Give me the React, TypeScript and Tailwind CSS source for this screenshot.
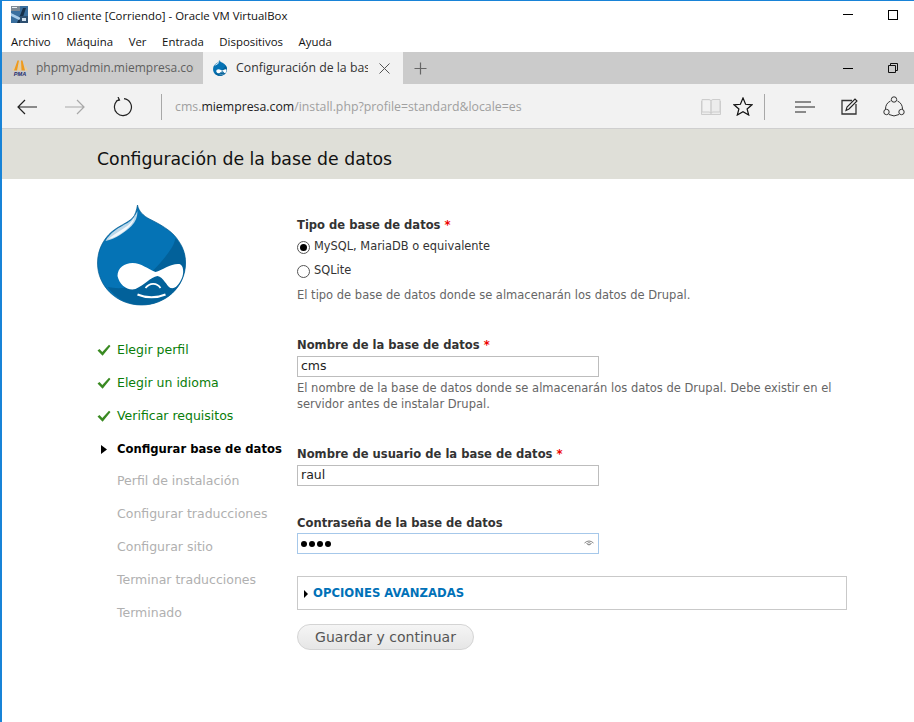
import React from "react";

const ui = { fontFamily: '"Open Sans", "Noto Sans", sans-serif' };
const dj = { fontFamily: '"DejaVu Sans", sans-serif' };

function DrupalDrop({ size = 89, height = 101 }: { size?: number; height?: number }) {
  return (
    <svg width={size} height={height} viewBox="-0.5 0 89 101">
      <path d="M40 0 C41 6 46 11 52 14 C62 19 73 25 79 33 C85 41 88 48 88 58 C88 82 68 100 44 100 C19 100 0 81 0 58 C0 45 6 34 14 27 C21 21 30 18 35 13 C38 10 39 5 40 0 Z" fill="#0573b5" stroke="#035a8f" strokeWidth="0.7" />
      <path d="M78 33 C86 42 88 50 88 58 C88 82 68 100 44 100 C30 100 18 93 10 82 C20 84 30 84 40 78 C50 72 64 58 72 46 C75 42 77 38 78 33 Z" fill="#02619a" />
      <path d="M8 36 C12 28 22 22 30 18 C35 15 38 10 40 6 C40 12 38 17 34 21 C28 27 18 34 8 36 Z" fill="#bcd8ea" />
      <path d="M11 34 C16 29 25 25 31 20 C34 17 36 14 37 12 C36 18 32 22 27 26 C22 30 16 33 11 34 Z" fill="#f2f8fc" />
      <path d="M20 71 C20 63 27 58 35 58 C44 58 50 64 58 67 C65 65 74 58 82 59 C86 60 87 68 84 74 C81 80 78 84 73 83 C69 81 66 72 60 71 C53 72 47 80 38 84 C30 86 22 80 20 71 Z" fill="#ffffff" />
      <path d="M48 83 C52 78 59 77 63 83" fill="none" stroke="#ffffff" strokeWidth="1.8" />
      <path d="M40 89.5 C48 93 60 93 68 89.5" fill="none" stroke="#ffffff" strokeWidth="2" />
    </svg>
  );
}

function Check() {
  return (
    <svg width="14" height="14" viewBox="0 0 14 14" className="shrink-0">
      <path d="M0.5 7.5 L2.5 6 L5.3 9 L12 1.8 L13.5 3 L5.6 12.8 Z" fill="#3a8a22" />
    </svg>
  );
}

function Step({ label, state }: { label: string; state: "done" | "active" | "todo" }) {
  const color = state === "done" ? "text-[#0a7d0a] text-[12.5px]" : state === "active" ? "text-black font-bold text-[11.6px] pt-[1px]" : "text-[#b0b0b0] text-[12.5px]";
  return (
    <div className={`flex h-[32.85px] items-center ${color}`} style={dj}>
      <div className="flex w-5 shrink-0 items-center">
        {state === "done" && <Check />}
        {state === "active" && (
          <svg width="6" height="9" viewBox="0 0 6 9" className="ml-1"><path d="M0 0 L6 4.5 L0 9 Z" fill="#000" /></svg>
        )}
      </div>
      <span className="whitespace-nowrap">{label}</span>
    </div>
  );
}

function Label({ children, req }: { children: React.ReactNode; req?: boolean }) {
  return (
    <div className="text-[11.55px] font-bold leading-[16px] text-[#333]">
      {children}
      {req && <span className="text-[#e00]"> *</span>}
    </div>
  );
}

function Input({ value, focus, children }: { value?: string; focus?: boolean; children?: React.ReactNode }) {
  return (
    <div className={`relative flex h-[21px] w-[302px] items-center border px-[3px] text-[12.5px] text-[#222] ${focus ? "border-[#a6c8ea]" : "border-[#bdbdbd]"}`}>
      {value}
      {children}
    </div>
  );
}

function Radio({ on, label }: { on?: boolean; label: string }) {
  return (
    <div className="flex h-[24px] items-center gap-[4px] text-[11.4px] text-[#333]">
      <span className="flex h-[13px] w-[13px] items-center justify-center rounded-full border border-[#555] bg-white">
        {on && <span className="h-[7px] w-[7px] rounded-full bg-black" />}
      </span>
      {label}
    </div>
  );
}

export default function App() {
  return (
    <div className="h-[722px] w-[914px] overflow-hidden border-l-2 border-t border-[#1883d7] bg-white">
      {/* VirtualBox title bar */}
      <div className="flex h-[27px] items-center bg-white" style={ui}>
        <svg width="17" height="17" viewBox="0 0 17 17" className="ml-[9px] shrink-0">
          <rect width="17" height="17" fill="#3a6f9e" />
          <rect x="0" y="0" width="9" height="5" fill="#7f8a94" />
          <rect x="1" y="1" width="5" height="1" fill="#e8edf2" />
          <path d="M6 17 L12 2 L15 2 L10 17 Z" fill="#16304a" />
          <path d="M0 7 L10 12 L8 14 L0 10 Z" fill="#a9cdea" />
          <rect x="9" y="10" width="8" height="7" fill="#2d4f70" />
          <rect x="11" y="12" width="4" height="3" fill="#cfe0ee" />
        </svg>
        <span className="ml-[4px] pt-[2px] text-[11.4px] text-[#111]">win10 cliente [Corriendo] - Oracle VM VirtualBox</span>
        <div className="ml-auto flex items-center">
          <span className="mr-[35px] h-px w-[10px] bg-black" />
          <span className="mr-[16px] h-[10px] w-[10px] border border-black" />
        </div>
      </div>
      {/* Menu bar */}
      <div className="flex h-[24px] items-center gap-[15.6px] pl-[9px] pt-[3px] text-[11.4px] text-[#111]" style={ui}>
        <span>Archivo</span>
        <span>Máquina</span>
        <span>Ver</span>
        <span>Entrada</span>
        <span>Dispositivos</span>
        <span>Ayuda</span>
      </div>
      {/* Tab strip */}
      <div className="flex h-[32px] items-stretch bg-[#cbcbcb]" style={ui}>
        <div className="flex w-[201px] items-center overflow-hidden pl-[10px]">
          <svg width="16" height="16" viewBox="0 0 16 16" className="shrink-0">
            <path d="M5.5 0.5 L2 10.5 H5 L7 0.5 Z M9 0.5 L9.5 10.5 H13 L10.5 0.5 Z" fill="#f09a1a" />
            <path d="M7.5 1 L6 10.5 H8.8 L8.3 1 Z M2.5 4 L0.5 10.5 H1.8 Z M13 4 L13.6 10.5 H15.5 Z" fill="#f8cf86" />
            <text x="8" y="15.7" textAnchor="middle" fontSize="5.6" fontWeight="700" fontStyle="italic" fill="#1d2a6b" fontFamily="Liberation Sans, sans-serif">PMA</text>
          </svg>
          <span className="ml-[8px] w-[158px] overflow-hidden whitespace-nowrap text-[12px] text-[#5f5f5f]">phpmyadmin.miempresa.com</span>
        </div>
        <div className="flex w-[200px] items-center bg-[#f2f2f2] pl-[10px]">
          <DrupalDrop size={14} height={16} />
          <span className="ml-[9px] w-[132px] overflow-hidden whitespace-nowrap text-[12.3px] text-[#333]">Configuración de la base de datos</span>
          <svg width="11" height="11" viewBox="0 0 11 11" className="ml-[11px]"><path d="M0.5 0.5 L10.5 10.5 M10.5 0.5 L0.5 10.5" stroke="#555" strokeWidth="1" /></svg>
        </div>
        <div className="flex w-[34px] items-center justify-center">
          <svg width="13" height="13" viewBox="0 0 13 13"><path d="M6.5 0.5 V12.5 M0.5 6.5 H12.5" stroke="#666" strokeWidth="1.2" /></svg>
        </div>
        <div className="ml-auto flex items-center">
          <span className="mr-[35px] h-px w-[10px] bg-black" />
          <svg width="10" height="10" viewBox="0 0 10 10" className="mr-[16px]"><path d="M0.5 2.5 H7.5 V9.5 H0.5 Z M2.5 2.5 V0.5 H9.5 V7.5 H7.5" fill="none" stroke="#111" strokeWidth="1" /></svg>
        </div>
      </div>
      {/* Edge toolbar */}
      <div className="flex h-[45px] items-center border-b border-[#cfcfcf] bg-[#f2f2f2] pt-[1px]" style={ui}>
        <svg width="20" height="16" viewBox="0 0 20 16" className="ml-[15px]"><path d="M20 8 H1 M8 1 L1 8 L8 15" fill="none" stroke="#222" strokeWidth="1.2" /></svg>
        <svg width="20" height="16" viewBox="0 0 20 16" className="ml-[28px]"><path d="M0 8 H19 M12 1 L19 8 L12 15" fill="none" stroke="#a8a8a8" strokeWidth="1.2" /></svg>
        <svg width="20" height="20" viewBox="0 0 20 20" className="ml-[28px]"><path d="M6 2.5 A8.5 8.5 0 1 0 11 1.6 M5 0 L6.5 3 L3 4" fill="none" stroke="#222" strokeWidth="1.2" /></svg>
        <span className="ml-[28px] h-[26px] w-px bg-[#a8a8a8]" />
        <span className="ml-[13px] pt-[1px] text-[12.3px] text-[#a0a0a0]">cms.<span className="text-[#222]">miempresa.com</span>/install.php?profile=standard&amp;locale=es</span>
        <svg width="20" height="18" viewBox="0 0 20 18" className="ml-auto"><path d="M1 1.5 H8 Q10 1.5 10 3.5 V15.5 Q10 14 8 14 H1 Z M19 1.5 H12 Q10 1.5 10 3.5 V15.5 Q10 14 12 14 H19 Z M0.5 3 V16.5 H19.5 V3" fill="#ececec" stroke="#cdcdcd" strokeWidth="1" /></svg>
        <svg width="20" height="19" viewBox="0 0 20 19" className="ml-[12px]"><path d="M10 1 L12.6 7.3 L19 7.8 L14.1 12 L15.7 18 L10 14.7 L4.3 18 L5.9 12 L1 7.8 L7.4 7.3 Z" fill="none" stroke="#111" strokeWidth="1.2" /></svg>
        <span className="ml-[11px] h-[26px] w-px bg-[#a8a8a8]" />
        <svg width="20" height="12" viewBox="0 0 20 12" className="ml-[30px]"><path d="M0 1 H16 M0 6 H20 M0 11 H11" stroke="#222" strokeWidth="1.1" /></svg>
        <svg width="17" height="17" viewBox="0 0 17 17" className="ml-[26px]"><path d="M11 2.5 H1 V16 H15 V6" fill="none" stroke="#333" strokeWidth="1.3" /><path d="M5 12.5 L6 9 L14 1 L16 3 L8 11 Z" fill="none" stroke="#222" strokeWidth="1.1" /></svg>
        <svg width="22" height="21" viewBox="0 0 22 21" className="ml-[25px] mr-[9px]"><path d="M7.5 5 A9 9 0 0 0 2.5 13 M19.5 13 A9 9 0 0 0 14.5 5 M6 18.5 A10 10 0 0 0 16 18.5" fill="none" stroke="#333" strokeWidth="1" /><circle cx="11" cy="3.5" r="2.7" fill="none" stroke="#333" /><circle cx="3.5" cy="16" r="2.7" fill="none" stroke="#333" /><circle cx="18.5" cy="16" r="2.7" fill="none" stroke="#333" /></svg>
      </div>
      {/* Drupal page */}
      <div style={dj}>
        <div className="flex h-[50px] items-center bg-[#dfdfd8] pl-[95px] pt-[11px] text-[17.3px] text-[#111]">Configuración de la base de datos</div>
        <div className="flex">
          <aside className="w-[295px] shrink-0 pl-[95px]">
            <div className="mt-[26px]">
              <DrupalDrop />
            </div>
            <div className="mt-[28px]">
              <Step label="Elegir perfil" state="done" />
              <Step label="Elegir un idioma" state="done" />
              <Step label="Verificar requisitos" state="done" />
              <Step label="Configurar base de datos" state="active" />
              <Step label="Perfil de instalación" state="todo" />
              <Step label="Configurar traducciones" state="todo" />
              <Step label="Configurar sitio" state="todo" />
              <Step label="Terminar traducciones" state="todo" />
              <Step label="Terminado" state="todo" />
            </div>
          </aside>
          <main className="w-[552px] pt-[38px]">
            <Label req>Tipo de base de datos</Label>
            <div className="mt-[2px]">
              <Radio on label="MySQL, MariaDB o equivalente" />
              <Radio label="SQLite" />
            </div>
            <p className="mt-[4px] text-[11.5px] leading-[16px] text-[#666]">El tipo de base de datos donde se almacenarán los datos de Drupal.</p>
            <div className="mt-[34px]"><Label req>Nombre de la base de datos</Label></div>
            <div className="mt-[3px]"><Input value="cms" /></div>
            <p className="mt-[3px] text-[11.5px] leading-[16px] text-[#666]">El nombre de la base de datos donde se almacenarán los datos de Drupal. Debe existir en el servidor antes de instalar Drupal.</p>
            <div className="mt-[34px]"><Label req>Nombre de usuario de la base de datos</Label></div>
            <div className="mt-[3px]"><Input value="raul" /></div>
            <div className="mt-[29px]"><Label>Contraseña de la base de datos</Label></div>
            <div className="mt-[2px]">
              <Input focus>
                <span className="flex gap-[2px]">
                  {[0, 1, 2, 3].map((i) => <span key={i} className="h-[6px] w-[6px] rounded-full bg-black" />)}
                </span>
                <svg width="10" height="7" viewBox="0 0 10 7" className="absolute right-[4px] top-[6px]"><path d="M0.5 3 Q5 -1 9.5 3 M2.5 3.5 Q5 6.5 7.5 3.5" fill="none" stroke="#666" strokeWidth="0.8" /><circle cx="5" cy="3.5" r="1.2" fill="none" stroke="#888" strokeWidth="0.7" /></svg>
              </Input>
            </div>
            <div className="mt-[22px] flex h-[34px] w-[550px] items-center border border-[#c9c9c9] pl-[6px] pt-[1px]">
              <svg width="4" height="8" viewBox="0 0 4 8"><path d="M0 0 L4 4 L0 8 Z" fill="#000" /></svg>
              <span className="ml-[5px] text-[11.65px] font-bold text-[#0071b8]">OPCIONES AVANZADAS</span>
            </div>
            <div className="mt-[14px] flex h-[26px] w-[177px] items-center justify-center rounded-[13px] border border-[#d4d4d4] bg-gradient-to-b from-[#f5f5f5] to-[#e6e6e6] text-[14px] text-[#555]">Guardar y continuar</div>
          </main>
        </div>
      </div>
    </div>
  );
}
